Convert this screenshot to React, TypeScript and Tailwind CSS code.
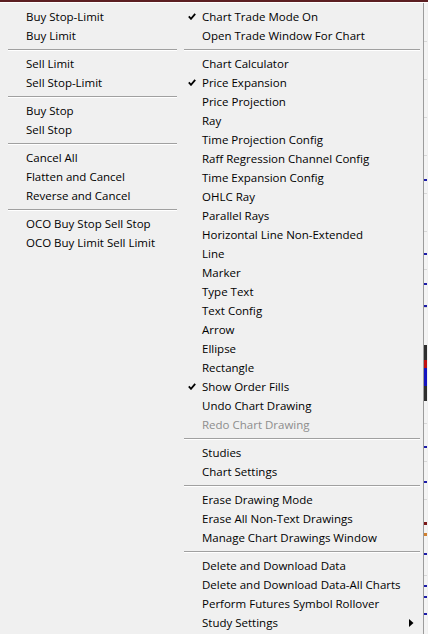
type Item = { label: string; checked?: boolean; disabled?: boolean; submenu?: boolean } | "sep";

const orderItems: Item[] = [
  { label: "Buy Stop-Limit" },
  { label: "Buy Limit" },
  "sep",
  { label: "Sell Limit" },
  { label: "Sell Stop-Limit" },
  "sep",
  { label: "Buy Stop" },
  { label: "Sell Stop" },
  "sep",
  { label: "Cancel All" },
  { label: "Flatten and Cancel" },
  { label: "Reverse and Cancel" },
  "sep",
  { label: "OCO Buy Stop Sell Stop" },
  { label: "OCO Buy Limit Sell Limit" },
];

const chartItems: Item[] = [
  { label: "Chart Trade Mode On", checked: true },
  { label: "Open Trade Window For Chart" },
  "sep",
  { label: "Chart Calculator" },
  { label: "Price Expansion", checked: true },
  { label: "Price Projection" },
  { label: "Ray" },
  { label: "Time Projection Config" },
  { label: "Raff Regression Channel Config" },
  { label: "Time Expansion Config" },
  { label: "OHLC Ray" },
  { label: "Parallel Rays" },
  { label: "Horizontal Line Non-Extended" },
  { label: "Line" },
  { label: "Marker" },
  { label: "Type Text" },
  { label: "Text Config" },
  { label: "Arrow" },
  { label: "Ellipse" },
  { label: "Rectangle" },
  { label: "Show Order Fills", checked: true },
  { label: "Undo Chart Drawing" },
  { label: "Redo Chart Drawing", disabled: true },
  "sep",
  { label: "Studies" },
  { label: "Chart Settings" },
  "sep",
  { label: "Erase Drawing Mode" },
  { label: "Erase All Non-Text Drawings" },
  { label: "Manage Chart Drawings Window" },
  "sep",
  { label: "Delete and Download Data" },
  { label: "Delete and Download Data-All Charts" },
  { label: "Perform Futures Symbol Rollover" },
  { label: "Study Settings", submenu: true },
];

function Check() {
  return (
    <svg width="8" height="7" viewBox="0 0 8 7" className="block">
      <path d="M0.8 3.4 L3 5.8 L7.2 0.8" fill="none" stroke="#000" strokeWidth="1.8" />
    </svg>
  );
}

function Separator({ className }: { className: string }) {
  return (
    <div className={`flex h-[9px] items-center ${className}`}>
      <div className="h-[2px] w-full border-t border-b border-t-[#a0a0a0] border-b-white" />
    </div>
  );
}

function Column({ items, sepClass, gutter }: { items: Item[]; sepClass: string; gutter: boolean }) {
  return (
    <div className="flex flex-col">
      {items.map((it, i) =>
        it === "sep" ? (
          <Separator key={i} className={sepClass} />
        ) : (
          <div key={i} className="flex h-[19px] items-center">
            {gutter ? (
              <div className="flex w-[22px] shrink-0 items-center pl-[8px]">{it.checked && <Check />}</div>
            ) : (
              <div className="w-[26px] shrink-0" />
            )}
            <span className={`flex-1 whitespace-nowrap ${it.disabled ? "text-[#8d8d8d]" : "text-black"}`}>
              {it.label}
            </span>
            {it.submenu && (
              <svg width="5" height="8" viewBox="0 0 5 8" className="mr-[9px]">
                <path d="M0 0 L4.5 4 L0 8 Z" fill="#000" />
              </svg>
            )}
          </div>
        )
      )}
    </div>
  );
}

// thin slice of the chart canvas visible past the menu's right edge
function ChartSlice() {
  const blueTicks = [176, 250, 280, 302, 443, 478, 550, 582, 593, 610];
  return (
    <svg width="3" height="631" className="block bg-[#f4f4f4]">
      {[38, 76, 114, 152, 190, 228, 266, 304, 420, 458, 496, 572].map((y) => (
        <rect key={y} x="0" y={y} width="3" height="1" fill="#d8d8d8" />
      ))}
      {blueTicks.map((y) => (
        <rect key={y} x="0" y={y} width="3" height="2" fill="#1c1ca8" />
      ))}
      <rect x="0" y="342" width="3" height="56" fill="#2e2e2e" />
      <rect x="0" y="357" width="3" height="8" fill="#c01010" />
      <rect x="0" y="365" width="3" height="18" fill="#1414c0" />
      <rect x="0" y="519" width="3" height="3" fill="#7a1616" />
      <rect x="0" y="530" width="3" height="3" fill="#d08030" />
    </svg>
  );
}

export default function App() {
  return (
    <div className="h-[634px] w-[428px] overflow-hidden bg-[#f0f0f0] text-[11.5px] leading-none font-['Open_Sans',sans-serif]">
      <div className="h-[2px] bg-[#5c1f22]" />
      <div className="h-[1px] bg-white" />
      <div className="flex">
        <div className="flex w-[423px] pt-[4px]">
          <div className="w-[180px] shrink-0">
            <Column items={orderItems} sepClass="pl-[8px] pr-[3px]" gutter={false} />
          </div>
          <div className="flex-1">
            <Column items={chartItems} sepClass="pl-[4px] pr-[3px]" gutter />
          </div>
        </div>
        <div className="w-[1px] bg-[#9c9c9c]" />
        <ChartSlice />
      </div>
    </div>
  );
}
